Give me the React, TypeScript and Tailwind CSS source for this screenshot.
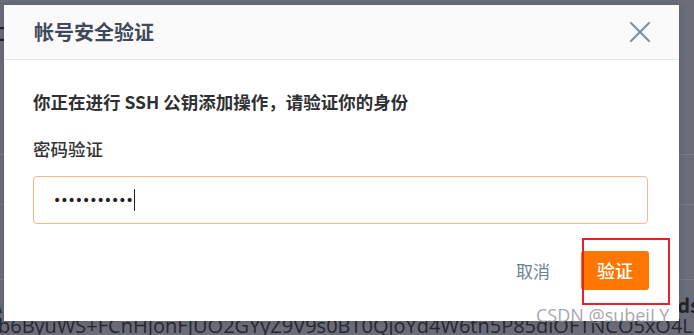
import React from 'react';

const font = { fontFamily: "'Noto Sans CJK SC', 'Noto Sans', sans-serif" };

const App = () => {
  return (
    <div className="relative w-[694px] h-[335px] overflow-hidden bg-[#6b6d79]" style={font}>
      {/* page behind the overlay */}
      <div className="absolute inset-0 flex flex-col">
        <div className="h-[155px] border-b border-[#7a7c87]" />
        <div className="h-[50px] border-b border-[#7a7c87]" />
        <div className="h-[75px] border-b border-[#777984]" />
      </div>
      <div className="absolute left-[-9px] top-[20px] text-[18px] font-bold text-[#23252d]">口</div>
      <div className="absolute left-[-10px] top-[164px] text-[18px] font-bold text-[#23252d]">：</div>
      <div className="absolute left-[-9px] top-[292px] text-[18px] text-[#2a2c35]">A</div>
      <div className="absolute right-[-6px] top-[290px] text-[20px] font-bold text-[#22242c]">ds</div>
      <div
        className="absolute left-[-2px] top-[312px] whitespace-nowrap text-[20px] leading-[28px] text-[#262830]"
        style={{ fontFamily: "'Open Sans', 'Noto Sans', sans-serif" }}
      >
        b6ByuWS+FCnHJonFJUO2GYyZ9V9s0BT0QjoYd4W6tn5P85dlOFTNCO5xO4LEw
      </div>

      {/* dialog */}
      <div className="absolute left-[4px] top-[5px] w-[675px] h-[316px] bg-white flex flex-col shadow-[0_0_8px_rgba(0,0,0,0.15)]">
        <div className="h-[55px] shrink-0 flex items-center justify-between pl-[30px] pr-[28px] bg-[#fafafa] border-b border-[#e3e6ea]">
          <span className="text-[20px] font-bold text-[#40485b]">帐号安全验证</span>
          <svg width="22" height="22" viewBox="0 0 22 22" fill="none" stroke="#7c8e9b" strokeWidth="2" strokeLinecap="round">
            <line x1="2" y1="2" x2="20" y2="20" />
            <line x1="20" y1="2" x2="2" y2="20" />
          </svg>
        </div>

        <div className="flex flex-col pl-[29px] pr-[31px] pt-[28px]">
          <p className="text-[17.5px] font-semibold text-[#2f3033] leading-[28px]">
            你正在进行 SSH 公钥添加操作，请验证你的身份
          </p>
          <p className="mt-[19px] text-[17.5px] font-medium text-[#333] leading-[28px]">密码验证</p>
          <div className="mt-[13px] h-[48px] border border-[#f5b886] rounded-[4px] flex items-center pl-[19px]">
            <span className="text-[14px] tracking-[-1px] text-[#222] leading-none" style={{ fontFamily: "'DejaVu Sans', sans-serif" }}>
              •••••••••••
            </span>
            <span className="ml-[1px] w-[1.5px] h-[22px] bg-[#222]" />
          </div>
        </div>

        <div className="flex-1 flex items-end justify-end gap-[31px] pr-[30px] pb-[31px]">
          <span className="text-[17px] text-[#6a8192] leading-[39px]">取消</span>
          <button className="w-[68px] h-[39px] rounded-[3px] bg-[#ff7600] text-white text-[18px] font-medium">验证</button>
        </div>
      </div>

      {/* annotation */}
      <div className="absolute left-[582px] top-[238px] w-[88px] h-[67px] border-2 border-[#e8222a]" />
      <div
        className="absolute left-[536px] top-[303px] text-[18px] leading-[24px] text-[#8d8f99]/80 whitespace-nowrap"
        style={{ fontFamily: "'Open Sans', 'Noto Sans', sans-serif" }}
      >
        CSDN @subeiLY
      </div>
    </div>
  );
};

export default App;
